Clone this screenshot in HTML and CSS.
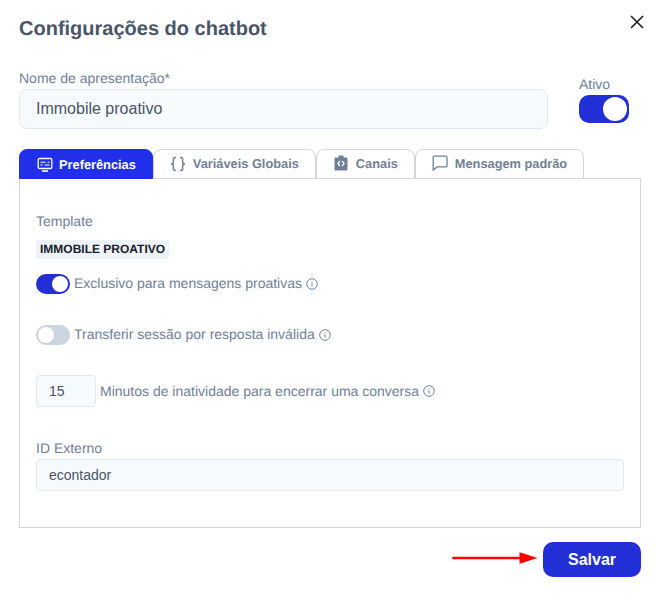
FILE: index.html
```html
<!DOCTYPE html>
<html lang="pt-BR">
<head>
    <meta charset="UTF-8">
    <title>Configurações do chatbot</title>
    <link rel="stylesheet" href="styles.css">
</head>
<body>
    <div class="modal">
        <div class="modal-head">
            <h1>Configurações do chatbot</h1>
            <button class="close" aria-label="Fechar">
                <svg width="14" height="14" viewBox="0 0 14 14"><path d="M1 1l12 12M13 1L1 13" stroke="#1a202c" stroke-width="1.6" fill="none"/></svg>
            </button>
        </div>

        <div class="name-row">
            <div class="name-field">
                <label>Nome de apresentação*</label>
                <input class="name-input" type="text" value="Immobile proativo">
            </div>
            <div class="active-field">
                <label>Ativo</label>
                <span class="switch switch-big on"><span class="knob"></span></span>
            </div>
        </div>

        <div class="tabs">
            <div class="tab tab-active">
                <svg width="16" height="16" viewBox="0 0 16 16" fill="none" stroke="#fff" stroke-width="1.3"><rect x="1.2" y="2.500" width="13.600" height="10" rx="1.2"/><path d="M5 15h6" stroke-width="1.6"/><path d="M3.500 6.200h5M10.500 6.200h2M3.500 9h2M7.500 9h5" stroke-width="1.100"/></svg>
                Preferências
            </div>
            <div class="tab">
                <svg width="16" height="16" viewBox="0 -1 16 16" fill="none" stroke="#718096" stroke-width="1.5"><path d="M6 1.500H5c-1 0-1.600.6-1.600 1.500v3C3.400 7.200 2.500 8 1 8c1.500 0 2.400.8 2.400 2v3c0 .9.6 1.500 1.600 1.500h1"/><path d="M10 1.500h1c1 0 1.600.6 1.600 1.500v3c0 1.200.9 2 2.400 2-1.500 0-2.400.8-2.400 2v3c0 .9-.6 1.500-1.600 1.500h-1"/></svg>
                Variáveis Globais
            </div>
            <div class="tab">
                <svg width="16" height="16" viewBox="0 0 16 16"><path fill="#718096" d="M2.500 2.500h3V.5h5v2h3c.6 0 1 .4 1 1v11c0 .6-.4 1-1 1h-11c-.6 0-1-.4-1-1v-11c0-.6.4-1 1-1z"/><path d="M6.800 6L5 8.500 6.800 11M9.200 6L11 8.500 9.200 11" stroke="#fff" stroke-width="1.300" fill="none"/></svg>
                Canais
            </div>
            <div class="tab">
                <svg width="16" height="16" viewBox="0 0 16 16" fill="none" stroke="#718096" stroke-width="1.300"><path d="M2.200 1.200h11.600c.7 0 1.200.5 1.200 1.200v8.300c0 .7-.5 1.200-1.200 1.200H5l-3.800 3.200V2.400c0-.7.400-1.200 1-1.200z"/></svg>
                Mensagem padrão
            </div>
        </div>

        <div class="panel">
            <div class="template-label">Template</div>
            <div class="template-row"><span class="tag">IMMOBILE PROATIVO</span></div>

            <div class="option option-first">
                <span class="switch on"><span class="knob"></span></span>
                <span class="switch-label">Exclusivo para mensagens proativas</span>
                <svg class="info" width="12" height="12" viewBox="0 0 12 12"><circle cx="6" cy="6" r="5.300" fill="none" stroke="#718096"/><path d="M6 5.300v3.200M6 3.200v1" stroke="#718096"/></svg>
            </div>
            <div class="option option-second">
                <span class="switch"><span class="knob"></span></span>
                <span class="switch-label">Transferir sessão por resposta inválida</span>
                <svg class="info" width="12" height="12" viewBox="0 0 12 12"><circle cx="6" cy="6" r="5.300" fill="none" stroke="#718096"/><path d="M6 5.300v3.200M6 3.200v1" stroke="#718096"/></svg>
            </div>
            <div class="option option-third">
                <input class="minutes" type="text" value="15">
                <span>Minutos de inatividade para encerrar uma conversa</span>
                <svg class="info" width="12" height="12" viewBox="0 0 12 12"><circle cx="6" cy="6" r="5.300" fill="none" stroke="#718096"/><path d="M6 5.300v3.200M6 3.200v1" stroke="#718096"/></svg>
            </div>

            <div class="external">
                <label>ID Externo</label>
                <input class="external-input" type="text" value="econtador">
            </div>
        </div>

        <div class="footer">
            <svg class="arrow" width="86" height="14" viewBox="0 0 86 14"><path d="M1.500 7h67" stroke="#f00" stroke-width="2.600" stroke-linecap="round"/><path d="M67.500 1.200l18 5.800-18 5.800z" fill="#f00"/></svg>
            <button class="save">Salvar</button>
        </div>
    </div>
</body>
</html>
```

FILE: styles.css
```css
* {
    box-sizing: border-box;
}
body {
    margin: 0;
    background-color: #fff;
    font-family: "Liberation Sans", Arial, sans-serif;
    color: #718096;
    text-rendering: geometricPrecision;
}
.modal {
    width: 662px;
    height: 595px;
    padding: 0 21px 0 19px;
}
.modal-head {
    display: flex;
    justify-content: space-between;
    height: 70px;
}
h1 {
    margin: 18px 0 0;
    font-size: 20px;
    line-height: 23px;
    font-weight: bold;
    color: #4a5568;
}
.close {
    width: 14px;
    height: 14px;
    margin: 15px -3px 0 0;
    padding: 0;
    border: 0;
    background: none;
}
.close svg {
    display: block;
}
label {
    display: block;
    font-size: 14px;
    line-height: 16px;
}
.name-row {
    display: flex;
    height: 79px;
}
.name-field {
    width: 529px;
}
.name-field label {
    margin-bottom: 3px;
}
input {
    font-family: inherit;
    color: #4a5568;
    background-color: #f7fafc;
    border: 1px solid #e2e8f0;
    outline: none;
}
.name-input {
    display: block;
    width: 100%;
    height: 40px;
    padding: 0 16px;
    font-size: 16px;
    border-radius: 8px;
}
.active-field {
    margin: 6px 0 0 31px;
}
.active-field label {
    margin-bottom: 3px;
}
.switch {
    display: flex;
    align-items: center;
    justify-content: flex-start;
    flex: none;
    width: 34px;
    height: 20px;
    padding: 2px;
    border-radius: 10px;
    background-color: #cbd5e0;
}
.switch.on {
    justify-content: flex-end;
    background-color: #222fd6;
}
.knob {
    width: 16px;
    height: 16px;
    border-radius: 50%;
    background-color: #fff;
}
.switch-big {
    width: 50px;
    height: 28px;
}
.switch-big .knob {
    width: 24px;
    height: 24px;
}
.tabs {
    display: flex;
    height: 30px;
}
.tab {
    display: flex;
    align-items: center;
    gap: 6.5px;
    height: 30px;
    padding: 0 16px 2px 16.5px;
    font-size: 12.8px;
    font-weight: bold;
    background-color: #fff;
    border: 1px solid #d6d6d6;
    border-radius: 8px 8px 0 0;
}
.tab-active {
    padding-bottom: 0;
    color: #fff;
    background-color: #222fea;
    border-color: #222fea;
}
.panel {
    height: 350px;
    margin-top: -1px;
    padding: 34px 16px 0;
    border: 1px solid #d6d6d6;
    font-size: 14px;
}
.template-label {
    line-height: 16px;
}
.template-row {
    margin-top: 10px;
    line-height: 19px;
}
.tag {
    display: inline-block;
    padding: 0 4px;
    font-size: 12px;
    font-weight: bold;
    line-height: 19px;
    color: #1a202c;
    background-color: #edf2f7;
    border-radius: 2px;
}
.option {
    display: flex;
    align-items: center;
    gap: 4px;
}
.switch-label {
    margin-bottom: 2px;
}
.option-first {
    margin-top: 15px;
    height: 20px;
}
.option-second {
    margin-top: 31px;
    height: 20px;
}
.option-third {
    margin-top: 30px;
    height: 32px;
}
.minutes {
    width: 60px;
    height: 32px;
    padding: 0 12px;
    font-size: 14px;
    border-radius: 4px;
}
.external {
    margin-top: 33px;
}
.external label {
    margin-bottom: 3px;
}
.external-input {
    display: block;
    width: 100%;
    height: 32px;
    padding: 0 12px;
    font-size: 14px;
    border-radius: 4px;
}
.footer {
    display: flex;
    align-items: center;
    justify-content: flex-end;
    margin-top: 14px;
}
.arrow {
    margin: 0 5px 4px 0;
}
.save {
    width: 98px;
    height: 35px;
    padding: 0;
    font-family: inherit;
    font-size: 16px;
    font-weight: bold;
    color: #fff;
    background-color: #222fd6;
    border: 0;
    border-radius: 10px;
}
```
